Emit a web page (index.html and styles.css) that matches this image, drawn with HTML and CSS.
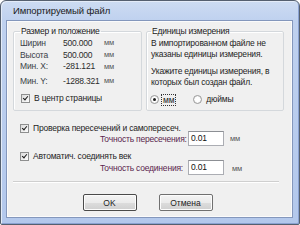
FILE: index.html
```html
<!DOCTYPE html>
<html lang="ru">
<head>
<meta charset="utf-8">
<title>Импортируемый файл</title>
<link rel="stylesheet" href="styles.css">
</head>
<body>
<div class="window">
  <div class="titlebar">Импортируемый файл</div>
  <div class="client">
    <div class="groups">
      <fieldset class="group group-size">
        <legend>Размер и положение</legend>
        <div class="row r1"><span class="lbl">Ширин</span><span class="val">500.000</span><span class="unit">мм</span></div>
        <div class="row r2"><span class="lbl">Высота</span><span class="val">500.000</span><span class="unit">мм</span></div>
        <div class="row r3"><span class="lbl">Мин. X:</span><span class="val">-281.121</span><span class="unit">мм</span></div>
        <div class="row r4"><span class="lbl">Мин. Y:</span><span class="val">-1288.321</span><span class="unit">мм</span></div>
        <label class="check center-check"><span class="box checked"></span><span>В центр страницы</span></label>
      </fieldset>
      <fieldset class="group group-units">
        <legend>Единицы измерения</legend>
        <p class="note">В импортированном файле не<br>указаны единицы измерения.</p>
        <p class="note note2">Укажите единицы измерения, в<br>которых был создан файл.</p>
        <div class="radios">
          <label class="radio"><span class="dot checked"></span><span class="focus">мм</span></label>
          <label class="radio radio2"><span class="dot"></span><span>дюймы</span></label>
        </div>
      </fieldset>
    </div>
    <div class="options">
      <label class="check opt"><span class="box checked"></span><span>Проверка пересечений и самопересеч.</span></label>
      <div class="prec prec1"><span class="prec-lbl">Точность пересечения:</span><span class="input">0.01</span><span class="unit u1">мм</span></div>
      <label class="check opt opt2"><span class="box checked"></span><span>Автоматич. соединять век</span></label>
      <div class="prec prec2"><span class="prec-lbl">Точность соединения:</span><span class="input">0.01</span><span class="unit u2">мм</span></div>
    </div>
    <div class="separator"></div>
    <div class="buttons">
      <button class="btn btn-ok">OK</button>
      <button class="btn btn-cancel">Отмена</button>
    </div>
  </div>
</div>
</body>
</html>
```

FILE: styles.css
```css
html, body {
  margin: 0;
  padding: 0;
  background: #ffffff;
}
body {
  font-family: "Liberation Sans", Arial, sans-serif;
  font-size: 8.5px;
  letter-spacing: -0.2px;
  color: #1e1e1e;
  white-space: nowrap;
}
.window {
  width: 300px;
  height: 225px;
  box-sizing: border-box;
  border: 1px solid #55606f;
  border-radius: 6px 6px 2px 2px;
  background: linear-gradient(180deg, #cddcf2 0px, #bfd1ef 20px, #b3c8ec 100%);
  padding: 0 6px 6px 5px;
  display: flex;
  flex-direction: column;
  box-shadow: inset 1px 1px 0 #e4ecf8, inset -1px -1px 0 #8aa2d2;
}
.titlebar {
  height: 19px;
  line-height: 20px;
  padding-left: 7px;
  font-size: 9.5px;
  letter-spacing: -0.1px;
  color: #1b1b1b;
}
.client {
  flex: 1;
  border: 1px solid #8497bc;
  background: #f0f0f0;
  box-shadow: inset 0 0 0 1px #fbfbfb;
  padding: 5px 8px 0 6px;
  display: flex;
  flex-direction: column;
}
.groups {
  display: flex;
  gap: 4px;
}
.group {
  margin: 0;
  box-sizing: border-box;
  height: 85px;
  border: 1px solid #d4d8dc;
  border-radius: 2px;
  box-shadow: inset 1px 1px 0 #fff;
  padding: 0 4px 0 6px;
  min-width: 0;
}
.group legend {
  padding: 0 1px;
  margin-left: 0;
  line-height: 11px;
  color: #222;
}
.group-size {
  width: 129px;
}
.group-units {
  flex: 1;
  padding-left: 4px;
}
.row {
  display: flex;
  line-height: 12px;
  color: #2c2c2c;
}
.row.r3 {
  line-height: 11px;
}
.row.r4 {
  margin-top: 3px;
}
.lbl {
  width: 43px;
  color: #3a3f48;
}
.val {
  width: 41px;
}
.unit {
  color: #555;
  font-size: 7.5px;
}
.check {
  display: flex;
  align-items: center;
  gap: 4px;
  line-height: 12px;
}
.center-check {
  margin-top: 5px;
  margin-left: 1px;
}
.box {
  width: 7px;
  height: 7px;
  border: 1px solid #8e8f8f;
  background: linear-gradient(135deg, #dcdcdc, #fdfdfd);
  position: relative;
  flex: none;
}
.box.checked::after {
  content: "";
  position: absolute;
  left: 2px;
  top: 0px;
  width: 2px;
  height: 4px;
  border: solid #1c1c1c;
  border-width: 0 1.5px 1.5px 0;
  transform: rotate(40deg);
}
.note {
  margin: 0;
  line-height: 11px;
  padding-top: 1px;
}
.note2 {
  margin-top: 5px;
}
.radios {
  display: flex;
  align-items: center;
  margin-top: 6px;
  margin-left: -1px;
}
.radio {
  display: flex;
  align-items: center;
  gap: 3px;
  line-height: 11px;
}
.radio2 {
  margin-left: 18px;
  gap: 4px;
}
.dot {
  width: 7px;
  height: 7px;
  border: 1px solid #9a9a9a;
  border-radius: 50%;
  background: radial-gradient(circle, #ffffff 40%, #e3e3e3);
  position: relative;
  flex: none;
}
.dot.checked::after {
  content: "";
  position: absolute;
  left: 2px;
  top: 2px;
  width: 3px;
  height: 3px;
  border-radius: 50%;
  background: #1a1a1a;
}
.focus {
  outline: 1px dotted #333;
  padding: 0 1px;
  line-height: 10px;
}
.options {
  padding-left: 8px;
  margin-top: 11px;
}
.opt {
  margin-left: -1px;
}
.opt2 {
  margin-top: 4px;
}
.prec {
  display: flex;
  align-items: center;
  height: 15px;
  margin-top: -3px;
  padding-left: 79px;
}
.prec2 {
  margin-top: -2px;
}
.prec-lbl {
  width: 88px;
  color: #5a1f4e;
}
.input {
  box-sizing: border-box;
  width: 36px;
  height: 15px;
  border: 1px solid #abadb3;
  border-top-color: #8c8f94;
  background: #fff;
  padding-left: 2px;
  line-height: 13px;
  color: #111;
}
.u1 {
  margin-left: 6px;
}
.u2 {
  margin-left: 8px;
  margin-top: 2px;
}
.separator {
  margin-top: 6px;
  height: 1px;
  background: #cfcfcf;
  border-bottom: 1px solid #fff;
  margin-right: 5px;
}
.buttons {
  display: flex;
  justify-content: center;
  gap: 22px;
  margin-top: 11px;
  padding-right: 2px;
}
.btn {
  box-sizing: border-box;
  width: 54px;
  height: 17px;
  font-family: "Liberation Sans", Arial, sans-serif;
  font-size: 8.5px;
  color: #1e1e1e;
  border: 1px solid #707070;
  border-radius: 2px;
  background: linear-gradient(180deg, #f4f4f4 0%, #ebebeb 50%, #dddddd 51%, #cfcfcf 100%);
  box-shadow: inset 0 0 0 1px #fcfcfc;
  padding: 0;
}
.btn-ok {
  border-color: #4a4a4a;
}
```
